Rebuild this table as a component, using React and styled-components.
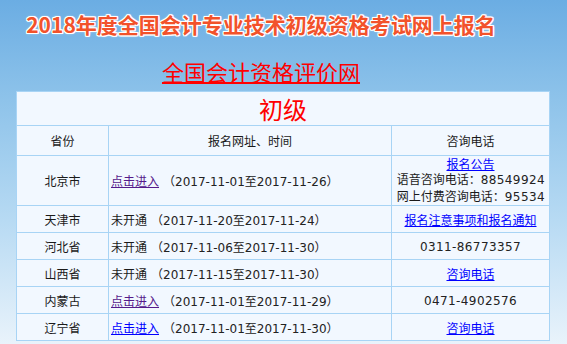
import styled, { createGlobalStyle } from 'styled-components'

const GlobalStyle = createGlobalStyle`
  html, body {
    margin: 0;
    padding: 0;
  }
  body {
    height: 344px;
    overflow: hidden;
    background: linear-gradient(180deg, #6badE3 0px, #8ec3ea 100px, #b7daf3 220px, #e9f3fb 344px);
    font-family: "DejaVu Sans", "Noto Sans CJK SC", sans-serif;
  }
`

const rows = [
  {
    name: '北京市',
    link: true,
    visited: true,
    from: '2017-11-01',
    to: '2017-11-26',
    tall: true
  },
  { name: '天津市', from: '2017-11-20', to: '2017-11-24', contact: { link: '报名注意事项和报名通知' } },
  { name: '河北省', from: '2017-11-06', to: '2017-11-30', contact: { phone: '0311-86773357' } },
  { name: '山西省', from: '2017-11-15', to: '2017-11-30', contact: { link: '咨询电话' } },
  { name: '内蒙古', link: true, visited: true, from: '2017-11-01', to: '2017-11-29', contact: { phone: '0471-4902576' } },
  { name: '辽宁省', link: true, from: '2017-11-01', to: '2017-11-30', contact: { link: '咨询电话' } }
]

function App () {
  return (
    <Page>
      <GlobalStyle />
      <Header>
        <Title>2018年度全国会计专业技术初级资格考试网上报名</Title>
        <SiteLink href='#'>全国会计资格评价网</SiteLink>
      </Header>
      <Table>
        <colgroup>
          <col style={{ width: 92 }} />
          <col style={{ width: 283 }} />
          <col />
        </colgroup>
        <tbody>
          <tr>
            <Caption colSpan={3}>初级</Caption>
          </tr>
          <tr>
            <HeadCell>省份</HeadCell>
            <HeadCell>报名网址、时间</HeadCell>
            <HeadCell>咨询电话</HeadCell>
          </tr>
          {rows.map(row => (
            <Row key={row.name} $tall={row.tall}>
              <Province>{row.name}</Province>
              <DateCell>
                {row.link
                  ? <EntryLink href='#' $visited={row.visited}>点击进入</EntryLink>
                  : <span>未开通</span>}
                <Dates>（{row.from}至{row.to}）</Dates>
              </DateCell>
              <Contact>
                {row.tall && (
                  <>
                    <Blue href='#'>报名公告</Blue>
                    <Line>语音咨询电话：<Num>88549924</Num></Line>
                    <Line>网上付费咨询电话：<Num>95534</Num></Line>
                  </>
                )}
                {row.contact && row.contact.link && <Blue href='#'>{row.contact.link}</Blue>}
                {row.contact && row.contact.phone && <Num>{row.contact.phone}</Num>}
              </Contact>
            </Row>
          ))}
        </tbody>
      </Table>
    </Page>
  )
}

export default App

const Page = styled.div`
  width: 567px;
  height: 344px;
`

const Header = styled.div`
  width: 522px;
  display: flex;
  flex-direction: column;
  align-items: center;
  padding-top: 10px;
`

const Title = styled.div`
  font-family: "Noto Sans CJK SC", sans-serif;
  font-weight: 700;
  font-size: 21px;
  line-height: 28px;
  color: #f2522b;
  text-shadow:
    1px 0 0 #fff, -1px 0 0 #fff, 0 1px 0 #fff, 0 -1px 0 #fff,
    1px 1px 0 #fff, -1px -1px 0 #fff, 1px -1px 0 #fff, -1px 1px 0 #fff,
    0 0 3px #fff;
`

const SiteLink = styled.a`
  margin-top: 21px;
  font-family: "Noto Sans CJK SC", sans-serif;
  font-size: 22px;
  line-height: 24px;
  color: #ff0000;
  text-decoration: underline;
  text-underline-offset: 1px;
`

const Table = styled.table`
  margin: 8px 0 0 16px;
  width: 534px;
  border-collapse: collapse;
  table-layout: fixed;
  background: #f2f8ff;
  font-size: 12px;
  color: #1a1a1a;

  td {
    border: 1px solid #a8d4f5;
    padding: 0;
  }
`

const Caption = styled.td`
  height: 33px;
  text-align: center;
  font-family: "Noto Sans CJK SC", sans-serif;
  font-size: 24px;
  line-height: 24px;
  color: #ff0000;
`

const HeadCell = styled.td`
  height: 29px;
  text-align: center;
  font-family: "Noto Sans CJK SC", sans-serif;
`

const Row = styled.tr`
  height: ${p => (p.$tall ? '50px' : '27px')};
`

const Province = styled.td`
  text-align: center;
  font-family: "Noto Sans CJK SC", sans-serif;
`

const DateCell = styled.td`
  padding-left: 2px !important;
  white-space: nowrap;
  font-family: "Noto Sans CJK SC", sans-serif;
`

const EntryLink = styled.a`
  color: ${p => (p.$visited ? '#551a8b' : '#0000ff')};
  text-decoration: underline;
`

const Dates = styled.span`
  font-family: "DejaVu Sans", "Noto Sans CJK SC", sans-serif;
  color: #222;
  margin-left: 4px;
`

const Contact = styled.td`
  text-align: center;
  font-family: "Noto Sans CJK SC", sans-serif;
  line-height: 15px;
  white-space: nowrap;
`

const Blue = styled.a`
  display: block;
  color: #0000ff;
  text-decoration: underline;
`

const Line = styled.div`
  text-align: right;
  padding-right: 4px;
`

const Num = styled.span`
  font-family: "DejaVu Sans", sans-serif;
  color: #222;
  letter-spacing: 0.4px;
`
